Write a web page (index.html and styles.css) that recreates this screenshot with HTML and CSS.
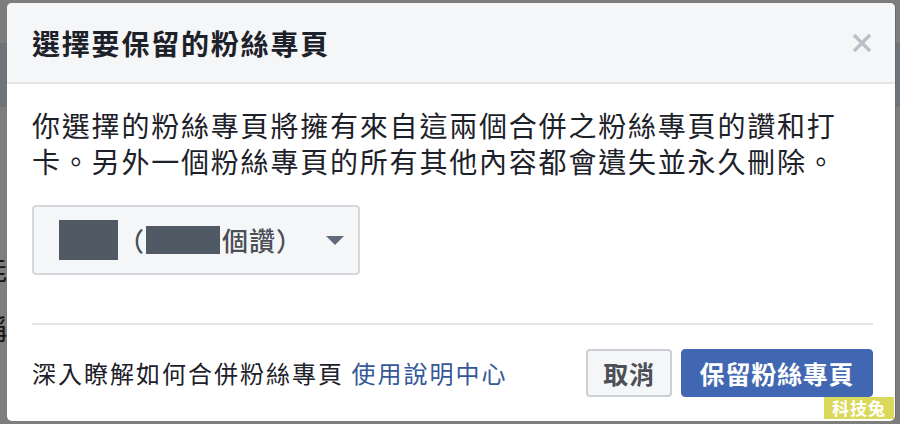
FILE: index.html
```html
<!DOCTYPE html>
<html lang="zh-Hant">
<head>
<meta charset="utf-8">
<title>選擇要保留的粉絲專頁</title>
<link rel="stylesheet" href="styles.css">
</head>
<body>
<div class="page">
  <div class="backdrop-text"><span>能</span><span>稱</span></div>
  <div class="dialog">
    <div class="dialog-header">
      <h1 class="dialog-title">選擇要保留的粉絲專頁</h1>
      <button class="close-btn" aria-label="關閉">
        <svg width="20" height="20" viewBox="0 0 20 20"><path d="M2 2 L18 18 M18 2 L2 18" stroke="#bcc0c9" stroke-width="3.4" stroke-linecap="butt" fill="none"/></svg>
      </button>
    </div>
    <div class="dialog-body">
      <p class="desc">你選擇的粉絲專頁將擁有來自這兩個合併之粉絲專頁的讚和打<br>卡。另外一個粉絲專頁的所有其他內容都會遺失並永久刪除。</p>
      <div class="select">
        <span class="redact redact-name"></span>
        <span class="select-text">（</span>
        <span class="redact redact-count"></span>
        <span class="select-text">個讚）</span>
        <svg class="caret" width="18" height="9" viewBox="0 0 18 9"><path d="M0 0 H18 L9 9 Z" fill="#606a78"/></svg>
      </div>
      <div class="divider"></div>
      <div class="footer">
        <p class="help">深入瞭解如何合併粉絲專頁 <a class="help-link" href="#">使用說明中心</a></p>
        <div class="actions">
          <button class="btn btn-cancel">取消</button>
          <button class="btn btn-primary">保留粉絲專頁</button>
        </div>
      </div>
    </div>
  </div>
  <div class="watermark">科技兔</div>
</div>
</body>
</html>
```
FILE: styles.css
```css
html, body {
  margin: 0;
  padding: 0;
}
body {
  width: 900px;
  height: 424px;
  overflow: hidden;
  background: linear-gradient(to bottom, #7d7d7d 0, #7d7d7d 43px, #6f737a 43px, #6f737a 107px, #7e7e7e 107px);
  font-family: "Noto Sans CJK TC", "Noto Sans", sans-serif;
  color: #1d2129;
}
.page {
  position: relative;
  box-sizing: border-box;
  width: 900px;
  height: 424px;
  padding: 3px 5px 3px 7px;
  display: flex;
}
.backdrop-text {
  position: absolute;
  left: -21px;
  top: 238px;
  display: flex;
  flex-direction: column;
  font-size: 28px;
  line-height: 60px;
  color: #151515;
}
.dialog {
  flex: 1;
  background: #fff;
  border-radius: 5px;
  overflow: hidden;
  box-shadow: 1px 0 0 #6a6a6a;
  display: flex;
  flex-direction: column;
}
.dialog-header {
  height: 79px;
  flex: none;
  background: #f5f6f7;
  border-bottom: 2px solid #e5e5e5;
  display: flex;
  align-items: center;
  justify-content: space-between;
  padding: 0 23px 0 25px;
}
.dialog-title {
  margin: 0;
  font-size: 28px;
  font-weight: 700;
  letter-spacing: 1.8px;
  line-height: 36px;
  color: #1d2129;
}
.close-btn {
  border: 0;
  background: transparent;
  padding: 0;
  width: 20px;
  height: 20px;
  display: flex;
}
.dialog-body {
  padding: 23px 22px 0 25px;
  display: flex;
  flex-direction: column;
}
.desc {
  margin: 0;
  font-size: 28px;
  line-height: 36px;
  letter-spacing: 1.8px;
  color: #1d2129;
  white-space: nowrap;
}
.select {
  margin-top: 26px;
  box-sizing: border-box;
  width: 328px;
  height: 70px;
  background: #f5f6f7;
  border: 2px solid #d4d7dc;
  border-radius: 4px;
  display: flex;
  align-items: center;
  padding-left: 25px;
  color: #4b4f56;
}
.select-text {
  font-size: 26px;
  font-weight: 500;
  line-height: 30px;
  letter-spacing: 1px;
}
.redact {
  display: block;
  background: #505a64;
}
.redact-name {
  width: 59px;
  height: 40px;
}
.redact-count {
  width: 74px;
  height: 28px;
  margin-left: 1px;
  margin-right: 2px;
}
.caret {
  margin-left: 23px;
  margin-top: 1px;
}
.divider {
  margin-top: 48px;
  height: 2px;
  background: #e3e5e8;
}
.footer {
  margin-top: 24px;
  display: flex;
  align-items: center;
  justify-content: space-between;
}
.help {
  margin: 0;
  font-size: 24px;
  letter-spacing: 2px;
  line-height: 30px;
  color: #1d2129;
  white-space: nowrap;
}
.help-link {
  color: #365899;
  text-decoration: none;
}
.actions {
  display: flex;
  gap: 9px;
}
.btn {
  box-sizing: border-box;
  height: 48px;
  border-radius: 4px;
  font-family: "Noto Sans CJK TC", "Noto Sans", sans-serif;
  font-size: 25px;
  font-weight: 700;
  letter-spacing: 0.8px;
  line-height: 30px;
  padding: 0;
  white-space: nowrap;
  display: flex;
  align-items: center;
  justify-content: center;
}
.btn-cancel {
  width: 86px;
  background: #f5f6f7;
  border: 2px solid #ccd0d5;
  color: #4b4f56;
}
.btn-primary {
  width: 192px;
  background: #4267b2;
  border: 1px solid #4267b2;
  color: #fff;
}
.watermark {
  position: absolute;
  left: 824px;
  top: 397px;
  width: 70px;
  height: 22px;
  background: #dad95b;
  color: #fff;
  font-size: 17px;
  font-weight: 700;
  line-height: 22px;
  text-align: center;
  letter-spacing: 1px;
}
```
